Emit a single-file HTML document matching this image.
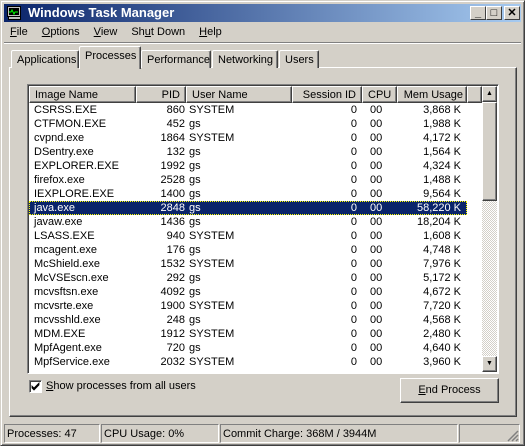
<!DOCTYPE html>
<html><head><style>
*{margin:0;padding:0;box-sizing:border-box}
body{width:525px;height:446px;background:#d4d0c8;font-family:"Liberation Sans",sans-serif;font-size:11px;color:#000;position:relative;overflow:hidden}
.a{position:absolute;white-space:nowrap}
.win{left:0;top:0;width:525px;height:446px;border:1px solid;border-color:#d4d0c8 #404040 #404040 #d4d0c8;box-shadow:inset 1px 1px #fff,inset -1px -1px #808080}
.title{left:4px;top:4px;width:517px;height:18px;background:linear-gradient(90deg,#0a246a,#a6caf0);color:#fff;font-weight:bold;font-size:13px;line-height:18px;padding-left:24px}
.tb{top:6px;width:16px;height:14px;background:#d4d0c8;border:1px solid;border-color:#fff #404040 #404040 #fff;color:#000;font-size:11px;line-height:12px;text-align:center;font-weight:bold}
.out{border:1px solid;border-color:#fff #404040 #404040 #fff;box-shadow:inset -1px -1px #808080}
.in{border:1px solid;border-color:#808080 #fff #fff #808080;box-shadow:inset 1px 1px #404040}
.sunk{border:1px solid;border-color:#808080 #fff #fff #808080;padding:3px 0 0 2px}
.menu span{margin-right:14px}
.tab{border:1px solid;border-bottom:none;border-color:#fff #404040 #404040 #fff;box-shadow:inset -1px 0 #808080;border-radius:2px 2px 0 0;padding:3px 0 0 5px;background:#d4d0c8}
.hd{top:86px;height:17px;border:1px solid;border-color:#fff #404040 #404040 #fff;box-shadow:inset -1px -1px #808080;padding:2px 5px 0 5px;background:#d4d0c8;overflow:hidden}
.r{position:absolute;left:29px;width:438px;height:14px;line-height:14px}
.r span{position:absolute}
.c1{left:5px}.c2{right:282px}.c3{left:160px}.c4{right:110px}.c5{left:341px}.c6{right:6px}
.sel{background:#0a246a;color:#fff;outline:1px dotted #ffff00;outline-offset:-1px}
</style></head><body>
<div class="a win"></div>
<div class="a title">Windows Task Manager</div>
<svg class="a" style="left:6px;top:5px" width="16" height="15"><rect x="1.5" y="1.5" width="13" height="10" fill="#c0c0c0" stroke="#000"/><rect x="3" y="3" width="10" height="7" fill="#000"/><path d="M3 7h2l1-2 2 4 1-2h3" stroke="#0f0" fill="none"/><rect x="2.5" y="11.5" width="12" height="3" fill="#c0c0c0" stroke="#000"/></svg>
<div class="a tb" style="left:470px">_</div>
<div class="a tb" style="left:486px">□</div>
<div class="a tb" style="left:504px">✕</div>
<div class="a menu" style="left:10px;top:26px"><span><u>F</u>ile</span><span><u>O</u>ptions</span><span><u>V</u>iew</span><span>Sh<u>u</u>t Down</span><span><u>H</u>elp</span></div>
<div class="a" style="left:4px;top:42px;width:517px;height:2px;border-top:1px solid #808080;border-bottom:1px solid #fff"></div>
<div class="a out" style="left:9px;top:67px;width:508px;height:350px"></div>
<div class="a tab" style="left:11px;top:50px;width:68px;height:18px">Applications</div>
<div class="a tab" style="left:141px;top:50px;width:70px;height:18px">Performance</div>
<div class="a tab" style="left:212px;top:50px;width:66px;height:18px">Networking</div>
<div class="a tab" style="left:279px;top:50px;width:40px;height:18px">Users</div>
<div class="a tab" style="left:79px;top:46px;width:62px;height:23px;z-index:2">Processes</div>
<div class="a in" style="left:27px;top:84px;width:472px;height:290px;background:#fff"></div>
<div class="a hd" style="left:29px;width:107px">Image Name</div>
<div class="a hd" style="left:136px;width:50px;text-align:right">PID</div>
<div class="a hd" style="left:186px;width:106px">User Name</div>
<div class="a hd" style="left:292px;width:70px;text-align:right">Session ID</div>
<div class="a hd" style="left:362px;width:35px;text-align:right">CPU</div>
<div class="a hd" style="left:397px;width:70px;text-align:right;padding:2px 3px 0 0">Mem Usage</div>
<div class="a hd" style="left:467px;width:15px"></div>
<div class="a" style="left:482px;top:86px;width:15px;height:286px;background:repeating-conic-gradient(#fff 0 25%,#d4d0c8 0 50%) 0 0/2px 2px"></div>
<div class="a out" style="left:482px;top:86px;width:15px;height:16px;background:#d4d0c8;font-size:7px;text-align:center;line-height:13px">▲</div>
<div class="a out" style="left:482px;top:102px;width:15px;height:99px;background:#d4d0c8"></div>
<div class="a out" style="left:482px;top:356px;width:15px;height:16px;background:#d4d0c8;font-size:7px;text-align:center;line-height:13px">▼</div>
<div class="r" style="top:103px"><span class="c1">CSRSS.EXE</span><span class="c2">860</span><span class="c3">SYSTEM</span><span class="c4">0</span><span class="c5">00</span><span class="c6">3,868 K</span></div>
<div class="r" style="top:117px"><span class="c1">CTFMON.EXE</span><span class="c2">452</span><span class="c3">gs</span><span class="c4">0</span><span class="c5">00</span><span class="c6">1,988 K</span></div>
<div class="r" style="top:131px"><span class="c1">cvpnd.exe</span><span class="c2">1864</span><span class="c3">SYSTEM</span><span class="c4">0</span><span class="c5">00</span><span class="c6">4,172 K</span></div>
<div class="r" style="top:145px"><span class="c1">DSentry.exe</span><span class="c2">132</span><span class="c3">gs</span><span class="c4">0</span><span class="c5">00</span><span class="c6">1,564 K</span></div>
<div class="r" style="top:159px"><span class="c1">EXPLORER.EXE</span><span class="c2">1992</span><span class="c3">gs</span><span class="c4">0</span><span class="c5">00</span><span class="c6">4,324 K</span></div>
<div class="r" style="top:173px"><span class="c1">firefox.exe</span><span class="c2">2528</span><span class="c3">gs</span><span class="c4">0</span><span class="c5">00</span><span class="c6">1,488 K</span></div>
<div class="r" style="top:187px"><span class="c1">IEXPLORE.EXE</span><span class="c2">1400</span><span class="c3">gs</span><span class="c4">0</span><span class="c5">00</span><span class="c6">9,564 K</span></div>
<div class="r sel" style="top:201px"><span class="c1">java.exe</span><span class="c2">2848</span><span class="c3">gs</span><span class="c4">0</span><span class="c5">00</span><span class="c6">58,220 K</span></div>
<div class="r" style="top:215px"><span class="c1">javaw.exe</span><span class="c2">1436</span><span class="c3">gs</span><span class="c4">0</span><span class="c5">00</span><span class="c6">18,204 K</span></div>
<div class="r" style="top:229px"><span class="c1">LSASS.EXE</span><span class="c2">940</span><span class="c3">SYSTEM</span><span class="c4">0</span><span class="c5">00</span><span class="c6">1,608 K</span></div>
<div class="r" style="top:243px"><span class="c1">mcagent.exe</span><span class="c2">176</span><span class="c3">gs</span><span class="c4">0</span><span class="c5">00</span><span class="c6">4,748 K</span></div>
<div class="r" style="top:257px"><span class="c1">McShield.exe</span><span class="c2">1532</span><span class="c3">SYSTEM</span><span class="c4">0</span><span class="c5">00</span><span class="c6">7,976 K</span></div>
<div class="r" style="top:271px"><span class="c1">McVSEscn.exe</span><span class="c2">292</span><span class="c3">gs</span><span class="c4">0</span><span class="c5">00</span><span class="c6">5,172 K</span></div>
<div class="r" style="top:285px"><span class="c1">mcvsftsn.exe</span><span class="c2">4092</span><span class="c3">gs</span><span class="c4">0</span><span class="c5">00</span><span class="c6">4,672 K</span></div>
<div class="r" style="top:299px"><span class="c1">mcvsrte.exe</span><span class="c2">1900</span><span class="c3">SYSTEM</span><span class="c4">0</span><span class="c5">00</span><span class="c6">7,720 K</span></div>
<div class="r" style="top:313px"><span class="c1">mcvsshld.exe</span><span class="c2">248</span><span class="c3">gs</span><span class="c4">0</span><span class="c5">00</span><span class="c6">4,568 K</span></div>
<div class="r" style="top:327px"><span class="c1">MDM.EXE</span><span class="c2">1912</span><span class="c3">SYSTEM</span><span class="c4">0</span><span class="c5">00</span><span class="c6">2,480 K</span></div>
<div class="r" style="top:341px"><span class="c1">MpfAgent.exe</span><span class="c2">720</span><span class="c3">gs</span><span class="c4">0</span><span class="c5">00</span><span class="c6">4,640 K</span></div>
<div class="r" style="top:355px"><span class="c1">MpfService.exe</span><span class="c2">2032</span><span class="c3">SYSTEM</span><span class="c4">0</span><span class="c5">00</span><span class="c6">3,960 K</span></div>
<div class="a in" style="left:29px;top:380px;width:13px;height:13px;background:#fff"></div>
<svg class="a" style="left:31px;top:382px" width="9" height="9"><path d="M1 4l2 2 5-5v2l-5 5-2-2z" fill="#000" stroke="#000" stroke-width="0.8"/></svg>
<div class="a" style="left:46px;top:380px"><u>S</u>how processes from all users</div>
<div class="a out" style="left:400px;top:378px;width:99px;height:25px;text-align:center;line-height:22px"><u>E</u>nd Process</div>
<div class="a sunk" style="left:4px;top:424px;width:96px;height:19px">Processes: 47</div>
<div class="a sunk" style="left:101px;top:424px;width:118px;height:19px">CPU Usage: 0%</div>
<div class="a sunk" style="left:220px;top:424px;width:238px;height:19px">Commit Charge: 368M / 3944M</div>
<div class="a sunk" style="left:459px;top:424px;width:61px;height:19px"></div>
<svg class="a" style="left:507px;top:430px" width="12" height="12"><path d="M11 1L1 11M11 5L5 11M11 9L9 11" stroke="#808080" stroke-width="1.5"/></svg>
</body></html>
